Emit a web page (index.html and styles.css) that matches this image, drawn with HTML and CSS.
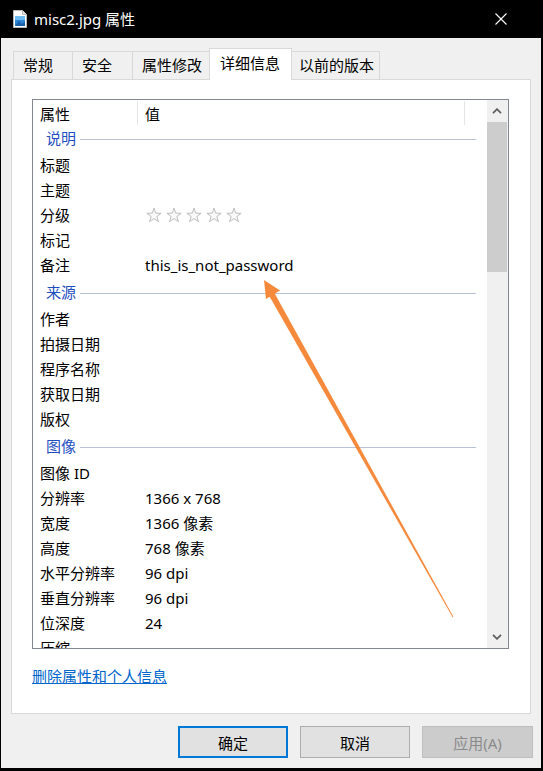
FILE: index.html
```html
<!DOCTYPE html>
<html lang="zh-CN">
<head>
<meta charset="utf-8">
<title>misc2.jpg 属性</title>
<link rel="stylesheet" href="styles.css">
</head>
<body>
<div class="window">
  <div class="titlebar">
    <svg class="app-icon" viewBox="0 0 14 18" width="14" height="18">
      <path d="M0.5 0.5 H9.5 L13.5 4.5 V17.5 H0.5 Z" fill="#fff" stroke="#b9b9b9"/>
      <path d="M9.5 0.5 V4.5 H13.5" fill="#e6e6e6" stroke="#b9b9b9"/>
      <rect x="2" y="6" width="10" height="10" fill="#2b84d8"/>
      <rect x="2" y="6" width="10" height="4" fill="#6cbcf2"/>
      <path d="M2 16 L6 11 L9 14 L12 11.5 V16 Z" fill="#185ea8"/>
    </svg>
    <span class="title">misc2.jpg 属性</span>
    <svg class="close" viewBox="0 0 12 12" width="12" height="12">
      <path d="M0.5 0.5 L11.5 11.5 M11.5 0.5 L0.5 11.5" stroke="#fff" stroke-width="1.1" fill="none"/>
    </svg>
  </div>
  <div class="client">
    <div class="tabs">
      <div class="tab tab-general">常规</div>
      <div class="tab tab-security">安全</div>
      <div class="tab tab-modify">属性修改</div>
      <div class="tab tab-details selected">详细信息</div>
      <div class="tab tab-versions">以前的版本</div>
    </div>
    <div class="panel">
      <div class="listview">
        <div class="list">
          <div class="lv-header">
            <div class="col col-name">属性</div>
            <div class="col col-value">值</div>
            <div class="col col-rest"></div>
          </div>

          <div class="group"><span>说明</span><i class="rule"></i></div>
          <div class="row"><span class="name">标题</span><span class="value"></span></div>
          <div class="row"><span class="name">主题</span><span class="value"></span></div>
          <div class="row"><span class="name">分级</span>
            <span class="value stars">
              <svg class="star" viewBox="0 0 16 16"><path d="M8 1.1 L9.76 6.17 L15.13 6.28 L10.85 9.53 L12.41 14.67 L8 11.6 L3.59 14.67 L5.15 9.53 L0.87 6.28 L6.24 6.17 Z"/></svg>
              <svg class="star" viewBox="0 0 16 16"><path d="M8 1.1 L9.76 6.17 L15.13 6.28 L10.85 9.53 L12.41 14.67 L8 11.6 L3.59 14.67 L5.15 9.53 L0.87 6.28 L6.24 6.17 Z"/></svg>
              <svg class="star" viewBox="0 0 16 16"><path d="M8 1.1 L9.76 6.17 L15.13 6.28 L10.85 9.53 L12.41 14.67 L8 11.6 L3.59 14.67 L5.15 9.53 L0.87 6.28 L6.24 6.17 Z"/></svg>
              <svg class="star" viewBox="0 0 16 16"><path d="M8 1.1 L9.76 6.17 L15.13 6.28 L10.85 9.53 L12.41 14.67 L8 11.6 L3.59 14.67 L5.15 9.53 L0.87 6.28 L6.24 6.17 Z"/></svg>
              <svg class="star" viewBox="0 0 16 16"><path d="M8 1.1 L9.76 6.17 L15.13 6.28 L10.85 9.53 L12.41 14.67 L8 11.6 L3.59 14.67 L5.15 9.53 L0.87 6.28 L6.24 6.17 Z"/></svg>
            </span>
          </div>
          <div class="row"><span class="name">标记</span><span class="value"></span></div>
          <div class="row"><span class="name">备注</span><span class="value">this_is_not_password</span></div>

          <div class="group"><span>来源</span><i class="rule"></i></div>
          <div class="row"><span class="name">作者</span><span class="value"></span></div>
          <div class="row"><span class="name">拍摄日期</span><span class="value"></span></div>
          <div class="row"><span class="name">程序名称</span><span class="value"></span></div>
          <div class="row"><span class="name">获取日期</span><span class="value"></span></div>
          <div class="row"><span class="name">版权</span><span class="value"></span></div>

          <div class="group"><span>图像</span><i class="rule"></i></div>
          <div class="row"><span class="name">图像 ID</span><span class="value"></span></div>
          <div class="row"><span class="name">分辨率</span><span class="value">1366 x 768</span></div>
          <div class="row"><span class="name">宽度</span><span class="value">1366 像素</span></div>
          <div class="row"><span class="name">高度</span><span class="value">768 像素</span></div>
          <div class="row"><span class="name">水平分辨率</span><span class="value">96 dpi</span></div>
          <div class="row"><span class="name">垂直分辨率</span><span class="value">96 dpi</span></div>
          <div class="row"><span class="name">位深度</span><span class="value">24</span></div>
          <div class="row"><span class="name">压缩</span><span class="value"></span></div>
        </div>
        <div class="scrollbar">
          <div class="sb-btn">
            <svg viewBox="0 0 10 6" width="10" height="6"><path d="M1 5.2 L5 1.2 L9 5.2" stroke="#606060" stroke-width="1.8" fill="none"/></svg>
          </div>
          <div class="thumb"></div>
          <div class="sb-track"></div>
          <div class="sb-btn">
            <svg viewBox="0 0 10 6" width="10" height="6"><path d="M1 0.8 L5 4.8 L9 0.8" stroke="#606060" stroke-width="1.8" fill="none"/></svg>
          </div>
        </div>
      </div>
      <a class="link" href="#">删除属性和个人信息</a>
    </div>
    <div class="buttons">
      <button class="btn btn-default">确定</button>
      <button class="btn">取消</button>
      <button class="btn btn-disabled">应用(A)</button>
    </div>
  </div>
  <svg class="arrow" viewBox="0 0 543 771" width="543" height="771">
    <polygon points="273.6,291.5 453.4,616.8 452.6,617.3 268.4,294.5" fill="#f68a3c"/>
    <polygon points="264,280 280,290.5 266,299" fill="#f68a3c"/>
  </svg>
</div>
</body>
</html>
```
FILE: styles.css
```css
html, body {
  margin: 0;
  padding: 0;
}
body {
  background: #000;
  font-family: "Noto Sans", "Noto Sans CJK SC", sans-serif;
  font-size: 15px;
  color: #000;
}
.window {
  position: relative;
  width: 543px;
  height: 771px;
  background: #000;
  display: flex;
  flex-direction: column;
  overflow: hidden;
}
.titlebar {
  height: 38px;
  flex: none;
  display: flex;
  align-items: center;
  color: #fff;
  padding: 0 36px 0 13px;
}
.app-icon {
  width: 14px;
  height: 18px;
  margin-right: 7px;
  flex: none;
}
.title {
  flex: 1;
  font-size: 15px;
  line-height: 20px;
}
.close {
  flex: none;
}
.client {
  flex: 1;
  background: #f0f0f0;
  margin: 0 2px 3px 1px;
  padding: 10px 10px 0 10px;
  display: flex;
  flex-direction: column;
}
.tabs {
  display: flex;
  align-items: flex-end;
  padding-left: 2px;
  position: relative;
  z-index: 1;
}
.tab {
  box-sizing: border-box;
  height: 28px;
  border: 1px solid #d9d9d9;
  border-bottom: none;
  background: #f0f0f0;
  padding-left: 9px;
  line-height: 26px;
  margin-left: -1px;
  white-space: nowrap;
}
.tab-general { width: 60px; margin-left: 0; }
.tab-security { width: 61px; }
.tab-modify { width: 78px; }
.tab-details { width: 83px; }
.tab-versions { width: 89px; padding-left: 7px; }
.tab.selected {
  height: 32px;
  background: #fff;
  margin-bottom: -1px;
  line-height: 28px;
  padding-left: 10px;
}
.panel {
  box-sizing: border-box;
  height: 635px;
  background: #fff;
  border: 1px solid #d9d9d9;
  padding: 19px 0 0 20px;
}
.listview {
  box-sizing: border-box;
  width: 477px;
  height: 550px;
  border: 1px solid #828790;
  display: flex;
}
.list {
  flex: 1;
  overflow: hidden;
}
.lv-header {
  height: 25px;
  display: flex;
  align-items: flex-end;
}
.col {
  box-sizing: border-box;
  height: 24px;
  border-right: 1px solid #e5e5e5;
  padding: 2px 0 0 7px;
  line-height: 22px;
}
.col-name { width: 105px; }
.col-value { width: 327px; }
.col-rest { flex: 1; border-right: none; }
.group {
  height: 29px;
  display: flex;
  align-items: center;
  padding: 0 11px 0 13px;
  color: #1f4fbf;
}
.group span {
  line-height: 20px;
  margin-top: -3px;
}
.rule {
  flex: 1;
  height: 1px;
  background: #b7c1d7;
  margin-left: 4px;
}
.row {
  box-sizing: border-box;
  height: 25px;
  padding-bottom: 4px;
  display: flex;
  align-items: center;
  line-height: 20px;
  white-space: nowrap;
}
.name {
  box-sizing: border-box;
  width: 105px;
  padding-left: 7px;
  flex: none;
}
.value {
  padding-left: 7px;
}
.stars {
  display: flex;
  gap: 4px;
  padding-left: 8px;
}
.star {
  width: 16px;
  height: 16px;
  fill: #fafafa;
  stroke: #bdbdbd;
  stroke-width: 1;
}
.scrollbar {
  width: 21px;
  flex: none;
  background: #f0f0f0;
  display: flex;
  flex-direction: column;
}
.sb-btn {
  height: 22px;
  flex: none;
  display: flex;
  align-items: center;
  justify-content: center;
  padding-right: 1px;
}
.thumb {
  height: 150px;
  flex: none;
  background: #cdcdcd;
  margin-right: 1px;
}
.sb-track {
  flex: 1;
}
.link {
  display: inline-block;
  margin-top: 17px;
  line-height: 20px;
  color: #0066cc;
  text-decoration: underline;
}
.buttons {
  display: flex;
  justify-content: flex-end;
  gap: 12px;
  margin-top: 12px;
  margin-right: -2px;
}
.btn {
  box-sizing: border-box;
  width: 110px;
  height: 32px;
  border: 1px solid #adadad;
  background: #e1e1e1;
  font: inherit;
  color: #000;
  padding: 0;
  border-radius: 0;
}
.btn-default {
  border: 2px solid #0078d7;
}
.btn-disabled {
  width: 111px;
  background: #cccccc;
  border-color: #bfbfbf;
  color: #8a8a8a;
}
.arrow {
  position: absolute;
  left: 0;
  top: 0;
  pointer-events: none;
}
```
